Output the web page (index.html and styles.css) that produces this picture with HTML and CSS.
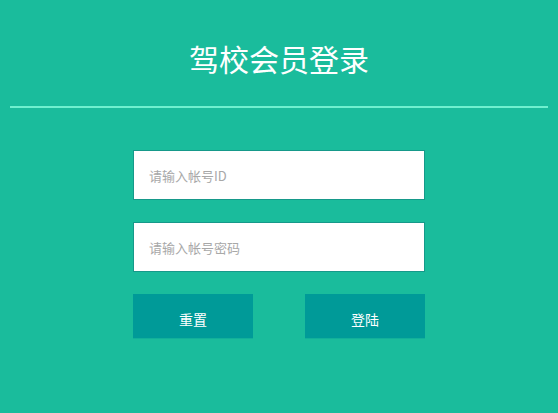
FILE: index.html
```html
<!DOCTYPE html>
<html lang="zh-CN">
<head>
<meta charset="utf-8">
<title>驾校会员登录</title>
<link rel="stylesheet" href="styles.css">
</head>
<body>
<div class="page">
  <header class="header">
    <h1 class="title">驾校会员登录</h1>
  </header>
  <div class="divider"></div>
  <form class="login-form">
    <input class="field" type="text" placeholder="请输入帐号ID">
    <input class="field" type="password" placeholder="请输入帐号密码">
    <div class="actions">
      <button class="btn" type="reset">重置</button>
      <button class="btn" type="button">登陆</button>
    </div>
  </form>
</div>
</body>
</html>
```
FILE: styles.css
```css
html, body {
  margin: 0;
  padding: 0;
  background: #1abc9c;
  height: 100%;
}
body {
  font-family: "Noto Sans CJK SC", "Noto Sans", sans-serif;
}
.page {
  display: flex;
  flex-direction: column;
}
.header {
  padding-top: 40px;
  display: flex;
  justify-content: center;
}
.title {
  margin: 0;
  font-size: 30px;
  line-height: 36px;
  font-weight: 400;
  color: #ffffff;
}
.divider {
  margin: 30px 10px 0 10px;
  height: 2px;
  background: #6ff0cf;
}
.login-form {
  width: 292px;
  margin: 42px auto 0 auto;
  display: flex;
  flex-direction: column;
  gap: 22px;
}
.field {
  box-sizing: border-box;
  width: 292px;
  height: 50px;
  margin: 0;
  border: 1px solid #16998a;
  background: #ffffff;
  padding: 0 15px;
  font-family: "Noto Sans CJK SC", "Noto Sans", sans-serif;
  font-size: 13px;
  color: #333;
  outline: none;
}
.field::placeholder {
  color: #a8a8a8;
}
.actions {
  display: flex;
  justify-content: space-between;
}
.btn {
  width: 120px;
  height: 44px;
  border: none;
  margin: 0;
  padding: 6px 0 0 0;
  background: #009a98;
  color: #ffffff;
  font-family: "Noto Sans CJK SC", "Noto Sans", sans-serif;
  font-size: 14px;
  box-shadow: 0 1px 0 #12b09a;
  cursor: pointer;
}
```
